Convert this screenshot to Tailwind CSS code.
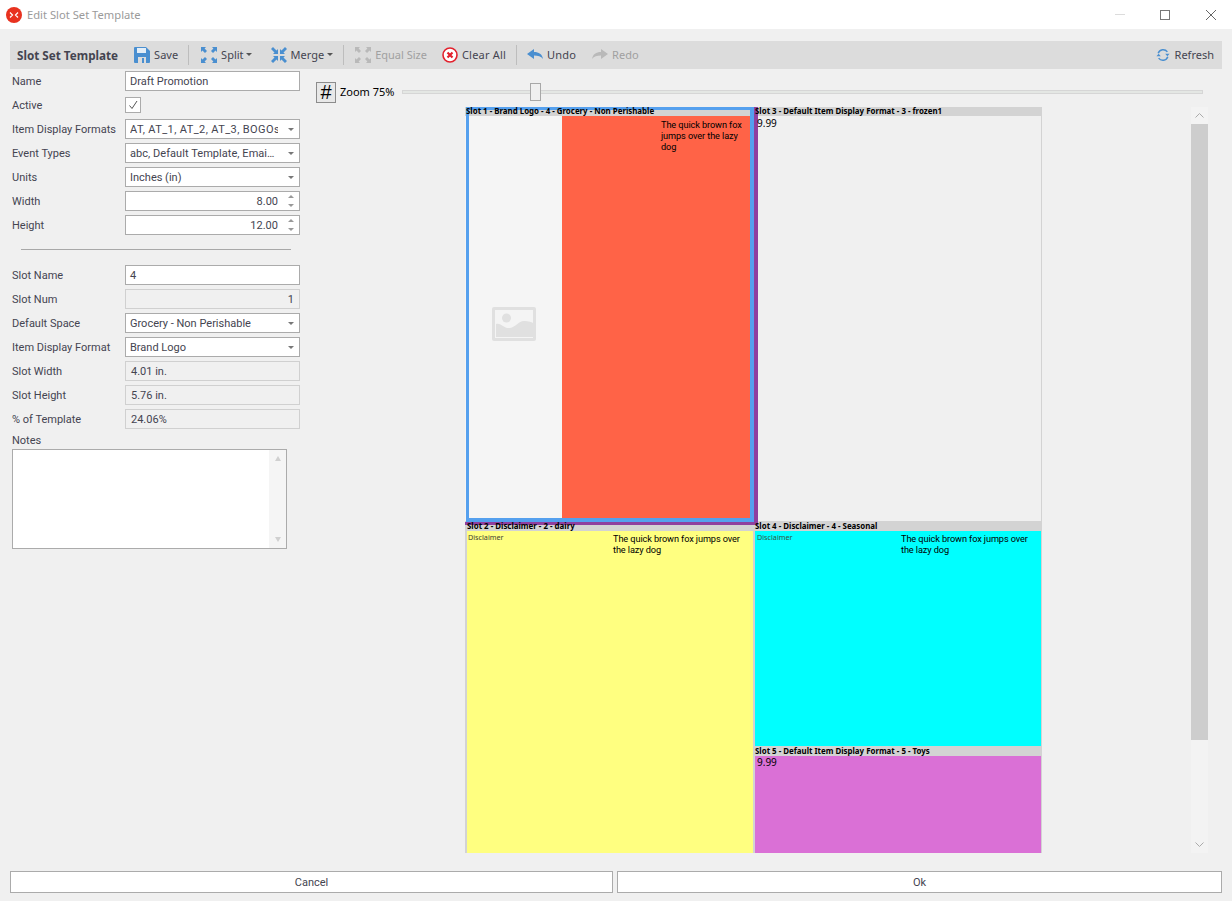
<!DOCTYPE html>
<html><head><meta charset="utf-8"><script src="https://cdn.jsdelivr.net/npm/@tailwindcss/browser@4"></script></head>
<body class="m-0">
<div class="w-[1232px] h-[901px] bg-[#f0f0f0] overflow-hidden relative flex flex-col text-[#444450] text-[11px] leading-[14px] font-['Roboto',sans-serif]">
  <!-- title bar -->
  <div class="h-[29px] bg-white flex items-center shrink-0 font-['Noto_Sans',sans-serif]">
    <svg class="ml-[6px] w-4 h-4" viewBox="0 0 16 16"><circle cx="8" cy="8" r="8" fill="#e8321f"/><path d="M4 5.500 6.500 8 4 10.500M12 5.500 9.500 8 12 10.500" stroke="#fff" stroke-width="1.200" fill="none"/></svg>
    <span class="ml-[5px] text-[11.2px] text-[#9a9a9a]">Edit Slot Set Template</span>
    <div class="ml-auto flex items-center">
      <div class="w-[10px] h-px bg-[#dcdcdc] mr-[35px]"></div>
      <div class="w-[10px] h-[10px] border border-[#777] mr-[36px]"></div>
      <svg class="w-[10px] h-[10px] mr-[16px]" viewBox="0 0 10 10"><path d="M0 0 10 10M10 0 0 10" stroke="#666" fill="none"/></svg>
    </div>
  </div>
  <!-- toolbar -->
  <div class="h-[28px] mt-[12px] mx-[10px] bg-[#dcdcdc] flex items-center shrink-0 font-['Noto_Sans',sans-serif]">
    <span class="ml-[7px] font-bold text-[11.7px] text-[#444450]">Slot Set Template</span>
    <svg class="ml-[16px] w-4 h-4" viewBox="0 0 16 16"><path d="M1 0h11l4 4v11a1 1 0 0 1-1 1H1a1 1 0 0 1-1-1V1a1 1 0 0 1 1-1z" fill="#4a8fd0"/><rect x="3" y="1" width="9" height="5" fill="#e4eef7"/><rect x="4" y="10" width="8" height="6" fill="#dcdcdc"/><rect x="8" y="11" width="2" height="5" fill="#4a8fd0"/></svg>
    <span class="ml-[4px]">Save</span>
    <div class="ml-[10px] w-px h-5 bg-[#bdbdbd]"></div>
    <svg class="ml-[12px] w-4 h-4" viewBox="0 0 16 16" fill="#4a8fd0"><path d="M0 0h5L3.600 1.500 6 4 4 6 1.500 3.600 0 5zM16 0v5l-1.500-1.400L12 6l-2-2 2.400-2.500L11 0zM0 16v-5l1.500 1.400L4 10l2 2-2.400 2.500L5 16zM16 16h-5l1.400-1.500L10 12l2-2 2.500 2.400L16 11z"/></svg>
    <span class="ml-[4px]">Split</span>
    <span class="ml-[2px] mb-[2px] border-x-[3px] border-x-transparent border-t-[3px] border-t-[#555]"></span>
    <svg class="ml-[19px] w-4 h-4" viewBox="0 0 16 16" fill="#4a8fd0"><path d="M7 7H2l1.500-1.500L0 2 2 0l3.500 3.500L7 2zM9 7V2l1.500 1.500L14 0l2 2-3.500 3.500L14 7zM7 9v5l-1.500-1.500L2 16l-2-2 3.500-3.500L2 9zM9 9h5l-1.500 1.500L16 14l-2 2-3.500-3.500L9 14z"/></svg>
    <span class="ml-[4px]">Merge</span>
    <span class="ml-[3px] mb-[2px] border-x-[3px] border-x-transparent border-t-[3px] border-t-[#555]"></span>
    <div class="ml-[10px] w-px h-5 bg-[#bdbdbd]"></div>
    <svg class="ml-[11px] w-4 h-4" viewBox="0 0 16 16" fill="#b9b9b9"><path d="M0 0h5L3.600 1.500 6 4 4 6 1.500 3.600 0 5zM16 0v5l-1.500-1.400L12 6l-2-2 2.400-2.500L11 0zM0 16v-5l1.500 1.400L4 10l2 2-2.400 2.500L5 16zM16 16h-5l1.400-1.500L10 12l2-2 2.500 2.400L16 11z"/></svg>
    <span class="ml-[4px] text-[#a0a0a0]">Equal Size</span>
    <svg class="ml-[15px] w-4 h-4" viewBox="0 0 16 16"><circle cx="8" cy="8" r="7" fill="#fff" stroke="#e2202c" stroke-width="1.600"/><path d="M5.500 5.500l5 5M10.500 5.500l-5 5" stroke="#e2202c" stroke-width="2.200"/></svg>
    <span class="ml-[4px] tracking-[0.2px]">Clear All</span>
    <div class="ml-[10px] w-px h-5 bg-[#bdbdbd]"></div>
    <svg class="ml-[10px] w-4 h-4" viewBox="0 0 16 16" fill="#4a8fd0"><path d="M0 7 7 2v3c5 0 8 2 9 7-2-3-5-3.500-9-3.500V12z"/></svg>
    <span class="ml-[4px] tracking-[0.2px]">Undo</span>
    <svg class="ml-[16px] w-4 h-4" viewBox="0 0 16 16" fill="#b9b9b9"><path d="M16 7 9 2v3C4 5 1 7 0 12c2-3 5-3.500 9-3.500V12z"/></svg>
    <span class="ml-[4px] text-[#a0a0a0]">Redo</span>
    <svg class="ml-auto w-[14px] h-[14px]" viewBox="0 0 16 16" fill="none"><path d="M2.500 6A6 6 0 0 1 13 4.500M13.500 10A6 6 0 0 1 3 11.500" stroke="#4a8fd0" stroke-width="1.700"/><path d="M15.500 6.500h-5l2.500 3zM.5 9.500h5L3 6.500z" fill="#4a8fd0"/></svg>
    <span class="ml-[5px] mr-[8px]">Refresh</span>
  </div>
  <!-- main -->
  <div class="flex-1 flex min-h-0">
    <!-- form -->
    <div class="w-[316px] shrink-0 pl-[12px] pt-[2px] flex flex-col">
      <div class="w-[288px] grid grid-cols-[113px_175px] auto-rows-[20px] gap-y-[4px] items-center [&>span]:translate-y-px [&>span]:whitespace-nowrap [&>div]:pt-[2px]">
        <span>Name</span><div class="h-5 bg-white border border-[#ababab] pl-[4px] flex items-center">Draft Promotion</div>
        <span>Active</span><div class="w-4 h-4 bg-white border border-[#ababab] flex items-center justify-center"><svg class="w-[10px] h-[10px] -mt-[2px]" viewBox="0 0 10 10"><path d="M1.500 5.500 4 8.500 9 1" stroke="#555" fill="none"/></svg></div>
        <span>Item Display Formats</span><div class="h-5 bg-white border border-[#ababab] pl-[4px] flex items-center relative overflow-hidden"><span class="whitespace-nowrap w-[148px] overflow-hidden tracking-[0.4px]">AT, AT_1, AT_2, AT_3, BOGOs</span><span class="absolute right-[5px] top-[8px] border-x-[3px] border-x-transparent border-t-[3px] border-t-[#777]"></span></div>
        <span>Event Types</span><div class="h-5 bg-white border border-[#ababab] pl-[4px] flex items-center relative"><span class="whitespace-nowrap tracking-[0.05px]">abc, Default Template, Emai…</span><span class="absolute right-[5px] top-[8px] border-x-[3px] border-x-transparent border-t-[3px] border-t-[#777]"></span></div>
        <span>Units</span><div class="h-5 bg-white border border-[#ababab] pl-[4px] flex items-center relative">Inches (in)<span class="absolute right-[5px] top-[8px] border-x-[3px] border-x-transparent border-t-[3px] border-t-[#777]"></span></div>
        <span>Width</span><div class="h-5 bg-white border border-[#ababab] pr-[21px] flex items-center justify-end relative">8.00<span class="absolute right-[5px] top-[3px] border-x-[3px] border-x-transparent border-b-[3px] border-b-[#999]"></span><span class="absolute right-[5px] bottom-[3px] border-x-[3px] border-x-transparent border-t-[3px] border-t-[#999]"></span></div>
        <span>Height</span><div class="h-5 bg-white border border-[#ababab] pr-[21px] flex items-center justify-end relative">12.00<span class="absolute right-[5px] top-[3px] border-x-[3px] border-x-transparent border-b-[3px] border-b-[#999]"></span><span class="absolute right-[5px] bottom-[3px] border-x-[3px] border-x-transparent border-t-[3px] border-t-[#999]"></span></div>
      </div>
      <div class="ml-[9px] w-[270px] h-px bg-[#a8a8a8] mt-[14px] mb-[15px]"></div>
      <div class="w-[288px] grid grid-cols-[113px_175px] auto-rows-[20px] gap-y-[4px] items-center [&>span]:translate-y-px [&>span]:whitespace-nowrap [&>div]:pt-[2px]">
        <span>Slot Name</span><div class="h-5 bg-white border border-[#ababab] pl-[4px] flex items-center">4</div>
        <span>Slot Num</span><div class="h-5 border border-[#d0d0d0] pr-[5px] flex items-center justify-end">1</div>
        <span>Default Space</span><div class="h-5 bg-white border border-[#ababab] pl-[4px] flex items-center relative">Grocery - Non Perishable<span class="absolute right-[5px] top-[8px] border-x-[3px] border-x-transparent border-t-[3px] border-t-[#777]"></span></div>
        <span>Item Display Format</span><div class="h-5 bg-white border border-[#ababab] pl-[4px] flex items-center relative">Brand Logo<span class="absolute right-[5px] top-[8px] border-x-[3px] border-x-transparent border-t-[3px] border-t-[#777]"></span></div>
        <span>Slot Width</span><div class="h-5 border border-[#d0d0d0] pl-[5px] flex items-center">4.01 in.</div>
        <span>Slot Height</span><div class="h-5 border border-[#d0d0d0] pl-[5px] flex items-center">5.76 in.</div>
        <span>% of Template</span><div class="h-5 border border-[#d0d0d0] pl-[5px] flex items-center">24.06%</div>
      </div>
      <span class="mt-[4px] translate-y-px">Notes</span>
      <div class="mt-[2px] w-[275px] h-[100px] bg-white border border-[#ababab] flex justify-end">
        <div class="w-[17px] bg-[#f5f5f5] flex flex-col items-center justify-between py-[6px]">
          <span class="border-x-[3.500px] border-x-transparent border-b-[5px] border-b-[#d0d0d0]"></span>
          <span class="border-x-[3.500px] border-x-transparent border-t-[5px] border-t-[#d0d0d0]"></span>
        </div>
      </div>
    </div>
    <!-- designer -->
    <div class="flex-1 flex flex-col min-w-0 relative">
      <div class="flex items-center pt-[8px] h-[38px] font-['Noto_Sans',sans-serif]">
        <div class="w-[20px] h-[21px] bg-[#e8e8e8] border border-[#8c8c8c] flex items-center justify-center text-black text-[20px] leading-none font-['Liberation_Sans']">#</div>
        <span class="ml-[4px] text-black text-[11px]">Zoom 75%</span>
        <div class="relative ml-[8px] w-[801px] h-[4px] bg-[#e4e7e4] border border-[#d6d6d6]">
          <div class="absolute left-[127px] top-[-8px] w-[11px] h-[18px] bg-[#f0f0f0] border border-[#a8a8a8]"></div>
        </div>
      </div>
      <div class="flex">
        <!-- canvas -->
        <div class="ml-[149px] w-[577px] h-[746px] flex relative overflow-hidden text-black font-['Noto_Sans',sans-serif]">
          <div class="w-[290px] flex flex-col">
            <div class="h-[414px] flex flex-col">
              <div class="h-[9px] bg-[#d3d3d3] text-[7.9px] leading-[9px] font-bold whitespace-nowrap pl-[1px]"><span class="relative z-10">Slot 1 - Brand Logo - 4 - Grocery - Non Perishable</span></div>
              <div class="flex-1 flex">
                <div class="w-[97px] bg-[#f5f5f5] flex items-center justify-center">
                  <svg class="w-[44px] h-[34px] mt-[11px]" viewBox="0 0 44 34"><rect width="44" height="34" rx="2" fill="#e0e0e0"/><rect x="3" y="3" width="38" height="28" fill="#f4f4f4"/><circle cx="14.500" cy="11" r="4.500" fill="#e0e0e0"/><path d="M4 30V17c5-2 8 5 14 4s9-8 15-7 7 1 8 2v14z" fill="#e0e0e0"/></svg>
                </div>
                <div class="flex-1 bg-[#ff6347] text-[9.2px] tracking-[-0.1px] leading-[11px] font-['Roboto',sans-serif] pl-[99px] pr-[4px] pt-[3px]">The quick brown fox jumps over the lazy dog</div>
              </div>
            </div>
            <div class="flex-1 flex flex-col border-l-2 border-r-2 border-[#d3d3d3]">
              <div class="h-[10px] -mx-[2px] pl-[2px] bg-[#d3d3d3] text-[7.9px] leading-[10px] font-bold whitespace-nowrap"><span class="relative z-10">Slot 2 - Disclaimer - 2 - dairy</span></div>
              <div class="flex-1 bg-[#ffff80] flex pt-[2px] pl-[1px] text-[9.2px] tracking-[-0.1px] leading-[11px] font-['Roboto',sans-serif]">
                <span class="w-[145px] text-[7.200px] tracking-normal leading-[9px] text-[#443] font-['Noto_Sans',sans-serif]">Disclaimer</span>
                <span class="w-[135px]">The quick brown fox jumps over the lazy dog</span>
              </div>
            </div>
          </div>
          <div class="w-[287px] flex flex-col border-r border-[#d3d3d3]">
            <div class="h-[414px] flex flex-col bg-[#f0f0f0]">
              <div class="h-[9px] bg-[#d3d3d3] text-[7.9px] leading-[9px] font-bold whitespace-nowrap"><span class="relative z-10">Slot 3 - Default Item Display Format - 3 - frozen1</span></div>
              <div class="pl-[2px] pt-[2px] text-[10px] leading-[11px] relative z-10">9.99</div>
            </div>
            <div class="h-[225px] flex flex-col">
              <div class="h-[10px] bg-[#d3d3d3] text-[7.9px] leading-[10px] font-bold whitespace-nowrap"><span class="relative z-10">Slot 4 - Disclaimer - 4 - Seasonal</span></div>
              <div class="flex-1 bg-[#00ffff] flex pt-[2px] pl-[2px] text-[9.2px] tracking-[-0.1px] leading-[11px] font-['Roboto',sans-serif]">
                <span class="w-[144px] text-[7.200px] tracking-normal leading-[9px] text-[#354] font-['Noto_Sans',sans-serif]">Disclaimer</span>
                <span class="w-[135px]">The quick brown fox jumps over the lazy dog</span>
              </div>
            </div>
            <div class="flex-1 flex flex-col">
              <div class="h-[10px] bg-[#d3d3d3] text-[7.9px] leading-[10px] font-bold whitespace-nowrap">Slot 5 - Default Item Display Format - 5 - Toys</div>
              <div class="flex-1 bg-[#da70d6] pl-[2px] pt-[1px] text-[10px] leading-[11px]">9.99</div>
            </div>
          </div>
          <!-- selection overlays -->
          <div class="absolute z-[5] left-0 top-0 w-[293px] h-[418px] border-r-[4px] border-b-[3px] border-[#8f3f9f] pointer-events-none"></div>
          <div class="absolute z-[5] left-[1px] top-0 w-[288px] h-[415px] border-[3px] border-r-[4px] border-b-[4px] border-[#55a0ee] pointer-events-none"></div>
        </div>
        <!-- scrollbar -->
        <div class="ml-[149px] w-[17px] h-[746px] bg-[#f3f3f3] flex flex-col items-center">
          <div class="h-[17px] flex items-center"><svg class="w-[9px] h-[5px]" viewBox="0 0 9 5"><path d="M.5 4.500 4.500.5 8.500 4.500" stroke="#aaa" fill="none"/></svg></div>
          <div class="w-[17px] h-[616px] bg-[#cdcdcd]"></div>
          <div class="mt-auto h-[17px] flex items-center"><svg class="w-[9px] h-[5px]" viewBox="0 0 9 5"><path d="M.5.500 4.500 4.500 8.500.5" stroke="#aaa" fill="none"/></svg></div>
        </div>
      </div>
    </div>
  </div>
  <!-- footer -->
  <div class="h-[30px] px-[10px] flex gap-[4px] shrink-0 items-start">
    <div class="w-[603px] h-[22px] pt-[2px] bg-white border border-[#ababab] flex items-center justify-center">Cancel</div>
    <div class="w-[605px] h-[22px] pt-[2px] bg-white border border-[#ababab] flex items-center justify-center">Ok</div>
  </div>
</div>
</body></html>
